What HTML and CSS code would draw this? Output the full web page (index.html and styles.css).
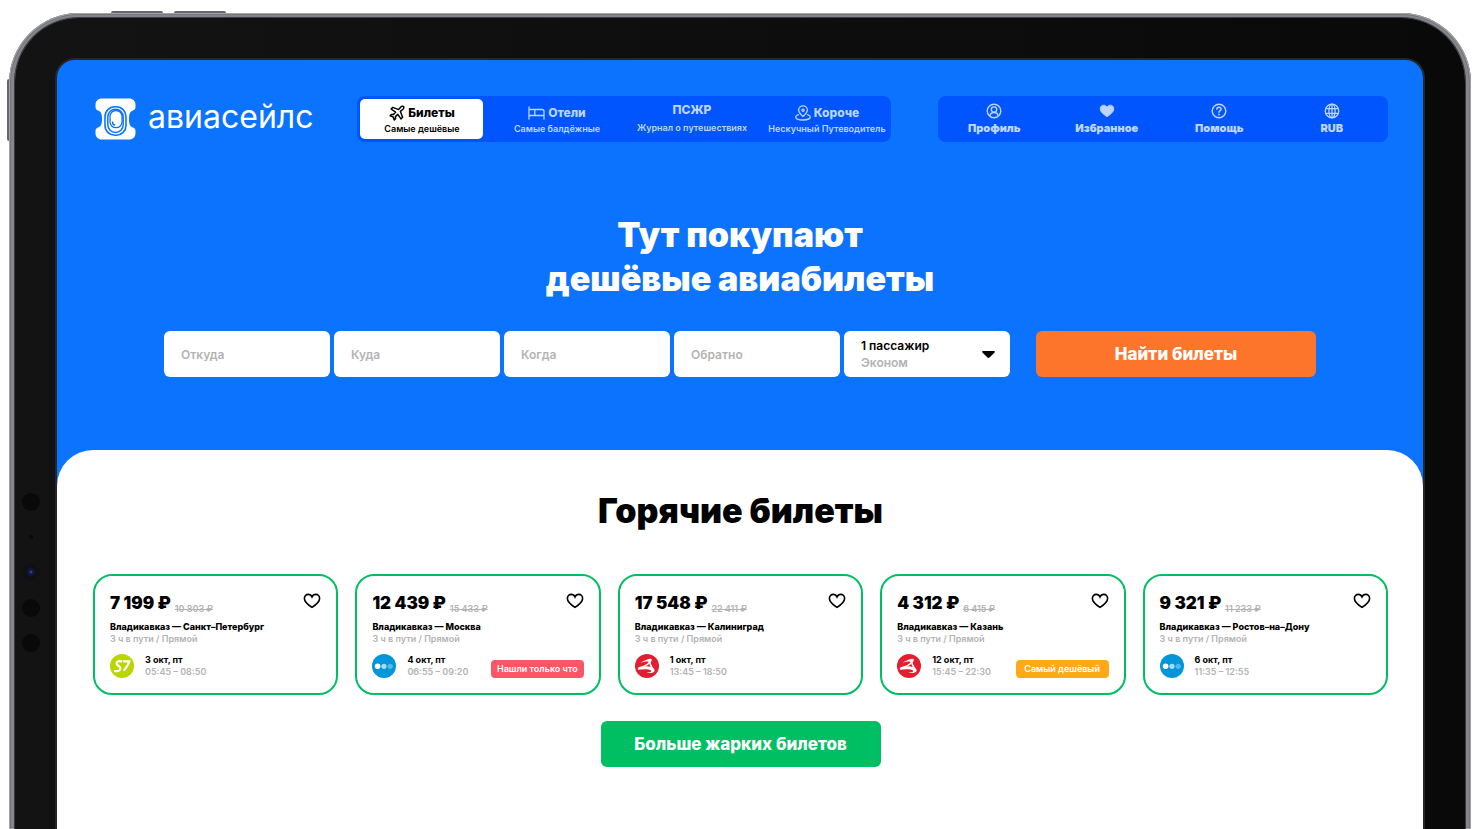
FILE: index.html
```html
<!DOCTYPE html>
<html lang="ru">

<head>
    <meta charset="UTF-8" />
    <meta name="viewport" content="width=device-width, initial-scale=1.0">
    <title>Авиасейлс</title>
    <link rel="stylesheet" href="styles.css">
</head>

<body>
    <!-- shared icons -->
    <svg class="sprite" aria-hidden="true">
        <symbol id="heart" viewBox="0 0 18 16">
            <path d="M9 14.4C6.2 12.6 1.4 9.4 1.4 5.5C1.4 3.1 3.1 1.4 5.2 1.4C6.9 1.4 8.3 2.3 9 3.9C9.7 2.3 11.1 1.4 12.8 1.4C14.9 1.4 16.6 3.1 16.6 5.5C16.6 9.4 11.8 12.6 9 14.4Z" />
        </symbol>
        <symbol id="azimuth" viewBox="0 0 24 24">
            <circle cx="12" cy="12" r="12" fill="#0096d9" />
            <circle cx="5.6" cy="12.3" r="2.8" fill="#fff" />
            <circle cx="12" cy="12.3" r="2.6" fill="#a8dbf3" />
            <circle cx="18.2" cy="12.3" r="2.6" fill="#56b9e7" />
        </symbol>
        <symbol id="redwings" viewBox="0 0 24 24">
            <circle cx="12" cy="12" r="12" fill="#e31e30" />
            <path d="M5.500 8.800C9 6.600 13 4.800 15.800 4.800C17.400 5 16.800 7 15.600 8.700C16.500 11.500 18 13.400 19.400 15.500C20.600 18.300 16.500 20 11.200 18.600C14.500 18.700 17 17.800 16 16.600C14.500 15.200 9 14.900 3.300 15.800C2.500 15.200 2.700 13.900 3.800 13.300C8 12 12.300 10.500 13.500 8.200C14 7 9.500 7.500 5.500 8.800Z" fill="#fff" />
            <path d="M9.300 12.600C11.300 11.900 12.900 11 14.200 9.700L15.600 12.900C13.600 12.300 11.500 12.200 9.300 12.600Z" fill="#e31e30" />
        </symbol>
    </svg>

    <div class="tablet">
        <span class="key key-top-1"></span>
        <span class="key key-top-2"></span>
        <span class="key key-side"></span>
        <div class="bezel">
            <span class="sensor sensor-1"></span>
            <span class="sensor sensor-mic"></span>
            <span class="sensor sensor-camera"></span>
            <span class="sensor sensor-2"></span>
            <span class="sensor sensor-3"></span>

            <div class="screen">
                <header class="header">
                    <a class="logo" href="#">
                        <svg width="41" height="42" viewBox="0 0 41 42">
                            <path d="M7 .5H34C38 .5 40.500 3 40.500 7V9C40.500 11 39.500 12 38 12.500C34.500 13.600 34 17 34 21C34 25 34.500 28.400 38 29.500C39.500 30 40.500 31 40.500 33V35C40.500 39 38 41.500 34 41.500H7C3 41.500 .5 39 .5 35V33C.5 31 1.500 30 3 29.500C6.500 28.400 7 25 7 21C7 17 6.500 13.600 3 12.500C1.500 12 .5 11 .5 9V7C.5 3 3 .5 7 .5Z" fill="#fff" />
                            <g fill="none" stroke="#0c73fe">
                                <rect x="10" y="8.800" width="21" height="28.400" rx="9.800" stroke-width="1.600" />
                                <rect x="12.800" y="11.200" width="15.400" height="23.200" rx="7.600" stroke-width="1.500" />
                                <rect x="15" y="12.500" width="12" height="17.200" rx="5.800" stroke-width="1.300" />
                                <path d="M17.600 23.500V24.500C17.600 26 18.600 27 20.200 27" stroke-width="1.400" />
                            </g>
                        </svg>
                        <span>авиасейлс</span>
                    </a>

                    <nav class="tabs">
                        <a class="tab active" href="#">
                            <span class="tab-title">
                                <svg width="16" height="16" viewBox="0 0 16 16" fill="none" stroke="currentColor" stroke-width="1.500" stroke-linejoin="round" stroke-linecap="round">
                                    <path d="M9.600 4.600L11.800 2C12.700 1 14 1 14.500 1.500C15 2 15 3.300 14 4.200L11.400 6.400L13.600 12.200L12 13.900L8.800 9.400L6.400 11.600L6.600 13.700L5.300 14.900L4.100 11.900L1.100 10.700L2.300 9.400L4.400 9.600L6.600 7.200L2.100 4L3.800 2.400L9.600 4.600Z" />
                                </svg>
                                Билеты
                            </span>
                            <span class="tab-note">Самые дешёвые</span>
                        </a>
                        <a class="tab" href="#">
                            <span class="tab-title">
                                <svg width="17" height="14" viewBox="0 0 17 14" fill="none" stroke="currentColor" stroke-width="1.300" stroke-linejoin="round" stroke-linecap="round">
                                    <path d="M1 1V13M1 3.500H14C15.200 3.500 16 4.300 16 5.500V13M1 9.500H16M6.800 3.500V9.500" />
                                </svg>
                                Отели
                            </span>
                            <span class="tab-note">Самые балдёжные</span>
                        </a>
                        <a class="tab tab-plain" href="#">
                            <span class="tab-title">ПСЖР</span>
                            <span class="tab-note">Журнал о путешествиях</span>
                        </a>
                        <a class="tab" href="#">
                            <span class="tab-title">
                                <svg width="16" height="16" viewBox="0 0 16 16" fill="none" stroke="currentColor" stroke-width="1.300" stroke-linecap="round">
                                    <path d="M8 11.500C5.500 9.300 3.600 7.500 3.600 5.100C3.600 2.700 5.500 .9 8 .9C10.500 .9 12.400 2.700 12.400 5.100C12.400 7.500 10.500 9.300 8 11.500Z" />
                                    <circle cx="8" cy="5.200" r="1.100" />
                                    <path d="M3.500 9.600C1.700 10.200 .7 11 .7 12C.7 13.800 4 15 8 15C12 15 15.300 13.800 15.300 12C15.300 11 14.300 10.200 12.500 9.600" />
                                </svg>
                                Короче
                            </span>
                            <span class="tab-note">Нескучный Путеводитель</span>
                        </a>
                    </nav>

                    <nav class="user-menu">
                        <a class="user-link" href="#">
                            <svg width="16" height="16" viewBox="0 0 16 16" fill="none" stroke="currentColor" stroke-width="1.400">
                                <circle cx="8" cy="8" r="6.800" />
                                <circle cx="8" cy="6.600" r="2.700" />
                                <path d="M3.700 13C4.200 10.800 5.700 9.500 8 9.500C10.300 9.500 11.800 10.800 12.300 13" />
                            </svg>
                            Профиль
                        </a>
                        <a class="user-link" href="#">
                            <svg width="16" height="16" viewBox="0 0 18 16" fill="currentColor" stroke="currentColor">
                                <use href="#heart" />
                            </svg>
                            Избранное
                        </a>
                        <a class="user-link" href="#">
                            <svg width="16" height="16" viewBox="0 0 16 16" fill="none" stroke="currentColor" stroke-width="1.400" stroke-linecap="round">
                                <circle cx="8" cy="8" r="6.800" />
                                <path d="M5.900 6.300C5.900 5 6.800 4.300 8 4.300C9.200 4.300 10.100 5.100 10.100 6.200C10.100 7.600 8 7.700 8 9.300" />
                                <circle cx="8" cy="11.600" r=".3" />
                            </svg>
                            Помощь
                        </a>
                        <a class="user-link" href="#">
                            <svg width="16" height="16" viewBox="0 0 16 16" fill="none" stroke="currentColor" stroke-width="1.300">
                                <circle cx="8" cy="8" r="6.800" />
                                <ellipse cx="8" cy="8" rx="3.100" ry="6.800" />
                                <path d="M1.800 5.700H14.200M1.800 10.300H14.200M8 1.200V14.800" />
                            </svg>
                            RUB
                        </a>
                    </nav>
                </header>

                <section class="hero">
                    <h1>Тут покупают<br>дешёвые авиабилеты</h1>
                    <form class="search">
                        <div class="fields">
                            <input class="field" type="text" placeholder="Откуда" aria-label="Откуда">
                            <input class="field" type="text" placeholder="Куда" aria-label="Куда">
                            <input class="field" type="text" placeholder="Когда" aria-label="Когда">
                            <input class="field" type="text" placeholder="Обратно" aria-label="Обратно">
                            <div class="field passengers">
                                <div class="passengers-text">
                                    <select class="count" aria-label="Пассажиры">
                                        <option>1 пассажир</option>
                                    </select>
                                    <select class="cabin" aria-label="Класс">
                                        <option>Эконом</option>
                                    </select>
                                </div>
                                <svg width="13" height="7" viewBox="0 0 13 7">
                                    <path d="M1 0H12C12.900 0 13.200 .8 12.600 1.400L7.500 6.500C7 7.100 6 7.100 5.500 6.500L.4 1.400C-.2 .8 .1 0 1 0Z" />
                                </svg>
                            </div>
                        </div>
                        <button class="btn btn-search" type="submit">Найти билеты</button>
                    </form>
                </section>

                <main class="hot">
                    <h2>Горячие билеты</h2>
                    <div class="cards">
                        <article class="card">
                            <div class="card-top">
                                <p class="price">7 199 ₽</p>
                                <del class="old-price">10 803 ₽</del>
                                <button class="like" type="button" aria-label="В избранное">
                                    <svg width="18" height="16"><use href="#heart" /></svg>
                                </button>
                            </div>
                            <h3>Владикавказ — Санкт–Петербург</h3>
                            <p class="route">3 ч в пути / Прямой</p>
                            <div class="card-bottom">
                                <svg class="airline" width="24" height="24" viewBox="0 0 24 24">
                                    <circle cx="12" cy="12" r="12" fill="#bbd500" />
                                    <path d="M12.300 7.600C9.500 6.700 6.500 7.300 6.500 9.500C6.500 11.800 10.700 11.900 10.300 14.600C9.900 17.200 6.700 17.600 3.900 16.900M13.200 7.300H19.300C18.300 11.200 16.400 13.300 13.600 16.800" fill="none" stroke="#fff" stroke-width="2.200" />
                                </svg>
                                <div>
                                    <p class="date">3 окт, пт</p>
                                    <p class="time">05:45 – 08:50</p>
                                </div>
                            </div>
                        </article>

                        <article class="card">
                            <div class="card-top">
                                <p class="price">12 439 ₽</p>
                                <del class="old-price">15 433 ₽</del>
                                <button class="like" type="button" aria-label="В избранное">
                                    <svg width="18" height="16"><use href="#heart" /></svg>
                                </button>
                            </div>
                            <h3>Владикавказ — Москва</h3>
                            <p class="route">3 ч в пути / Прямой</p>
                            <div class="card-bottom">
                                <svg class="airline" width="24" height="24"><use href="#azimuth" /></svg>
                                <div>
                                    <p class="date">4 окт, пт</p>
                                    <p class="time">06:55 – 09:20</p>
                                </div>
                                <span class="badge badge-new">Нашли только что</span>
                            </div>
                        </article>

                        <article class="card">
                            <div class="card-top">
                                <p class="price">17 548 ₽</p>
                                <del class="old-price">22 411 ₽</del>
                                <button class="like" type="button" aria-label="В избранное">
                                    <svg width="18" height="16"><use href="#heart" /></svg>
                                </button>
                            </div>
                            <h3>Владикавказ — Калиниград</h3>
                            <p class="route">3 ч в пути / Прямой</p>
                            <div class="card-bottom">
                                <svg class="airline" width="24" height="24"><use href="#redwings" /></svg>
                                <div>
                                    <p class="date">1 окт, пт</p>
                                    <p class="time">13:45 – 18:50</p>
                                </div>
                            </div>
                        </article>

                        <article class="card">
                            <div class="card-top">
                                <p class="price">4 312 ₽</p>
                                <del class="old-price">6 415 ₽</del>
                                <button class="like" type="button" aria-label="В избранное">
                                    <svg width="18" height="16"><use href="#heart" /></svg>
                                </button>
                            </div>
                            <h3>Владикавказ — Казань</h3>
                            <p class="route">3 ч в пути / Прямой</p>
                            <div class="card-bottom">
                                <svg class="airline" width="24" height="24"><use href="#redwings" /></svg>
                                <div>
                                    <p class="date">12 окт, пт</p>
                                    <p class="time">15:45 – 22:30</p>
                                </div>
                                <span class="badge badge-cheap">Самый дешёвый</span>
                            </div>
                        </article>

                        <article class="card">
                            <div class="card-top">
                                <p class="price">9 321 ₽</p>
                                <del class="old-price">11 233 ₽</del>
                                <button class="like" type="button" aria-label="В избранное">
                                    <svg width="18" height="16"><use href="#heart" /></svg>
                                </button>
                            </div>
                            <h3>Владикавказ — Ростов–на–Дону</h3>
                            <p class="route">3 ч в пути / Прямой</p>
                            <div class="card-bottom">
                                <svg class="airline" width="24" height="24"><use href="#azimuth" /></svg>
                                <div>
                                    <p class="date">6 окт, пт</p>
                                    <p class="time">11:35 – 12:55</p>
                                </div>
                            </div>
                        </article>
                    </div>
                    <button class="btn btn-more" type="button">Больше жарких билетов</button>
                </main>
            </div>
        </div>
    </div>
</body>

</html>
```
FILE: styles.css
```css
* {
    box-sizing: border-box;
    margin: 0;
    padding: 0;
}

body {
    display: flex;
    min-height: 100vh;
    padding: 13px 9px 0;
    background: #fff;
    font-family: Inter, "Liberation Sans", sans-serif;
    color: #000;
}

a {
    color: inherit;
    text-decoration: none;
}

button,
input,
select {
    font-family: inherit;
    border: none;
}

.sprite {
    position: absolute;
    width: 0;
    height: 0;
}

/* Tablet */

.tablet {
    position: relative;
    flex: 1;
    display: flex;
    padding: 5px 6px 0;
    border-radius: 70px 70px 0 0;
    background: #85868c;
    box-shadow: inset 0 0 0 1px #a3a4a9, inset 0 0 0 2px #75767b;
}

.bezel {
    position: relative;
    flex: 1;
    display: flex;
    padding: 40px 40px 0;
    border-radius: 64px 64px 0 0;
    background: linear-gradient(90deg, #131313, #090909);
    box-shadow: 0 0 0 1px #3b3c40;
}

.screen {
    flex: 1;
    display: flex;
    flex-direction: column;
    border: 2px solid #26272a;
    border-bottom: none;
    border-radius: 20px 20px 0 0;
    background: #0c73fe;
    overflow: hidden;
}

.key {
    position: absolute;
    background: #65666b;
}

.key-top-1,
.key-top-2 {
    top: -2px;
    width: 52px;
    height: 2px;
    border-radius: 2px 2px 0 0;
}

.key-top-1 {
    left: 102px;
}

.key-top-2 {
    left: 165px;
}

.key-side {
    left: -2px;
    top: 66px;
    width: 2px;
    height: 62px;
    border-radius: 2px 0 0 2px;
}

.sensor {
    position: absolute;
    left: 7px;
    width: 18px;
    height: 18px;
    border-radius: 50%;
    background: #090909;
}

.sensor-1 {
    top: 475px;
}

.sensor-mic {
    left: 14px;
    top: 517px;
    width: 4px;
    height: 4px;
}

.sensor-camera {
    top: 545px;
    background: radial-gradient(circle, #3c49d8 0, #15183f 2px, #101014 5px);
}

.sensor-2 {
    top: 581px;
}

.sensor-3 {
    top: 616px;
}

/* Header */

.header {
    display: flex;
    align-items: center;
    gap: 44px;
    padding: 36px 35px 0 38px;
}

.logo {
    display: flex;
    align-items: center;
    gap: 12px;
    color: #fff;
    font-size: 32px;
    font-weight: 400;
}

.logo span {
    padding-bottom: 4px;
    line-height: 38px;
}

.tabs {
    display: flex;
    gap: 12px;
    height: 46px;
    padding: 3px;
    border-radius: 8px;
    background: #0055ff;
    color: #bed6ff;
}

.tab {
    display: flex;
    flex-direction: column;
    align-items: center;
    justify-content: center;
    width: 123px;
    padding-top: 3px;
    border-radius: 5px;
    white-space: nowrap;
}

.tab-plain {
    padding: 0;
    gap: 2px;
}

.tab.active {
    background: #fff;
    color: #000;
}

.tab-title {
    display: flex;
    align-items: center;
    gap: 3px;
    font-size: 12px;
    font-weight: 800;
    line-height: 16px;
}

.tab-note {
    font-size: 9px;
    font-weight: 600;
    line-height: 16px;
}

.user-menu {
    display: grid;
    grid-template-columns: repeat(4, 1fr);
    width: 450px;
    height: 46px;
    margin-left: auto;
    border-radius: 8px;
    background: #0055ff;
    color: #bed6ff;
}

.user-link {
    display: flex;
    flex-direction: column;
    align-items: center;
    justify-content: center;
    gap: 1px;
    font-size: 11px;
    font-weight: 900;
    line-height: 16px;
}

/* Hero */

.hero {
    padding: 71px 36px 73px;
}

h1,
h2 {
    font-size: 34px;
    font-weight: 900;
    line-height: 44px;
    text-align: center;
}

h1 {
    color: #fff;
}

.search {
    display: flex;
    justify-content: center;
    gap: 26px;
    margin-top: 30px;
}

.fields {
    display: grid;
    grid-template-columns: repeat(5, 166px);
    gap: 4px;
}

.field {
    width: 100%;
    height: 46px;
    padding: 0 17px;
    border-radius: 6px;
    background: #fff;
    font-size: 12px;
    font-weight: 600;
}

.field::placeholder {
    color: #b3b3b3;
}

.passengers {
    display: flex;
    align-items: center;
    justify-content: space-between;
    padding-right: 15px;
}

.passengers-text {
    display: flex;
    flex-direction: column;
}

.passengers select {
    appearance: none;
    background: none;
    font-size: 12px;
    font-weight: 600;
    line-height: 17px;
}

.passengers .cabin {
    color: #b3b3b3;
}

.btn {
    width: 280px;
    height: 46px;
    border-radius: 6px;
    color: #fff;
    font-size: 17px;
    font-weight: 800;
    cursor: pointer;
}

.btn-search {
    background: #fd752b;
}

.btn-more {
    background: #00bf62;
}

/* Hot tickets */

.hot {
    flex: 1;
    display: flex;
    flex-direction: column;
    align-items: center;
    padding: 39px 35px 39px 36px;
    border-radius: 36px 36px 0 0;
    background: #fff;
}

.cards {
    display: grid;
    grid-template-columns: repeat(5, 1fr);
    gap: 17px;
    width: 100%;
    margin: 41px 0 26px;
}

.card {
    padding: 15px;
    border: 2px solid #00bf62;
    border-radius: 19px;
    font-size: 9px;
    font-weight: 600;
    line-height: 12px;
    white-space: nowrap;
}

.card-top {
    display: flex;
    align-items: flex-end;
    gap: 4px;
    height: 24px;
}

.price {
    font-size: 17px;
    font-weight: 900;
    line-height: 24px;
}

.old-price,
.route,
.time {
    color: #b3b3b3;
}

.like {
    align-self: flex-start;
    height: 18px;
    margin-left: auto;
    padding-top: 2px;
    background: none;
    cursor: pointer;
}

.like svg {
    display: block;
    fill: none;
    stroke: #000;
    stroke-width: 1.6px;
}

h3 {
    margin-top: 6px;
    font-size: 9px;
    font-weight: 800;
    line-height: 12px;
}

.card-bottom {
    display: flex;
    align-items: center;
    gap: 11px;
    margin-top: 9px;
}

.date {
    font-weight: 700;
}

.badge {
    align-self: flex-end;
    width: 93px;
    margin-left: auto;
    border-radius: 4px;
    color: #fff;
    line-height: 18px;
    text-align: center;
}

.badge-new {
    background: #fc5565;
}

.badge-cheap {
    background: #ffa919;
}
```
